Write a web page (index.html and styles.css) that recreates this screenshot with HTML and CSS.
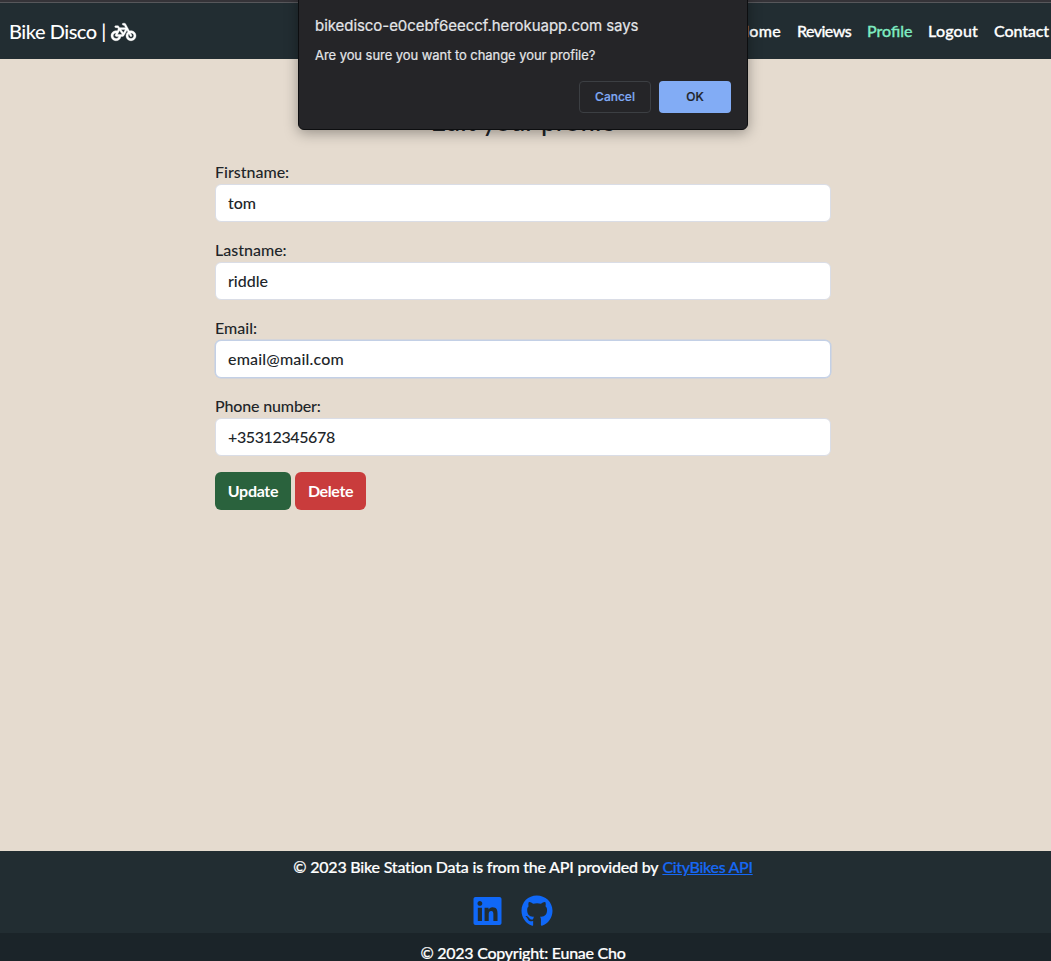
FILE: index.html
```
<!DOCTYPE html>
<html lang="en">
<head>
<meta charset="utf-8">
<title>Bike Disco</title>
<link rel="stylesheet" href="styles.css">
</head>
<body>
<header class="navbar">
  <a class="brand"><span class="brand-name">Bike Disco |</span>
    <svg class="bike" viewBox="0 0 640 512"><path fill="currentColor" stroke="currentColor" stroke-width="10" d="M312 32c-13.3 0-24 10.7-24 24s10.7 24 24 24h25.7l34.6 64H222.9l-27.4-38C191 99.7 183.7 96 176 96H120c-13.3 0-24 10.7-24 24s10.7 24 24 24h43.7l22.1 30.7-26.6 53.1c-10-2.5-20.5-3.8-31.2-3.8C57.3 224 0 281.3 0 352s57.3 128 128 128c65.3 0 119.1-48.9 127-112h49c8.5 0 16.3-4.5 20.7-11.8l84.8-143.5 21.7 40.1C402.4 276.3 384 312 384 352c0 70.7 57.3 128 128 128s128-57.3 128-128-57.3-128-128-128c-13.5 0-26.5 2.1-38.7 6L375.4 48.8C369.8 38.4 359 32 347.2 32H312zM458.6 303.7l32.3 59.7c6.3 11.7 20.9 16 32.5 9.7s16-20.9 9.7-32.5l-32.3-59.7c3.6-.6 7.4-.9 11.2-.9 39.8 0 72 32.2 72 72s-32.2 72-72 72-72-32.2-72-72c0-18.6 7-35.5 18.6-48.3zM133.2 368h65c-7.3 32.1-36 56-70.2 56-39.8 0-72-32.2-72-72s32.2-72 72-72c1.7 0 3.4.1 5.1.2l-24.2 48.5c-9 18.1 4.1 39.4 24.3 39.4zm33.7-48l50.7-101.3 72.9 101.2-.1.1H166.9zm90.5-128H365.9L317 274.8 257.4 192z"/></svg>
  </a>
  <nav class="links">
    <a class="link home">Home</a>
    <a class="link reviews">Reviews</a>
    <a class="link profile">Profile</a>
    <a class="link logout">Logout</a>
    <a class="link contact">Contact</a>
  </nav>
</header>
<main class="page">
  <h1 class="title">Edit your profile</h1>
  <form class="form">
    <label class="field"><span class="label">Firstname:</span><input class="input" value="tom"></label>
    <label class="field"><span class="label">Lastname:</span><input class="input" value="riddle"></label>
    <label class="field"><span class="label">Email:</span><input class="input input-active" value="email@mail.com"></label>
    <label class="field"><span class="label label-phone">Phone number:</span><input class="input input-phone" value="+35312345678"></label>
    <div class="actions">
      <button type="button" class="btn btn-update">Update</button>
      <button type="button" class="btn btn-delete">Delete</button>
    </div>
  </form>
</main>
<footer class="footer">
  <p class="credit"><span class="credit-text">© 2023 Bike Station Data is from the API provided by</span> <a class="api">CityBikes API</a></p>
  <div class="social">
    <svg class="linkedin" viewBox="0 0 448 512"><path fill="currentColor" d="M416 32H31.9C14.3 32 0 46.5 0 64.3v383.4C0 465.5 14.3 480 31.9 480H416c17.6 0 32-14.5 32-32.3V64.3c0-17.8-14.4-32.3-32-32.3zM135.4 416H69V202.2h66.5V416zm-33.2-243c-21.3 0-38.5-17.3-38.5-38.5S80.9 96 102.2 96c21.2 0 38.5 17.3 38.5 38.5 0 21.3-17.2 38.5-38.5 38.5zm282.1 243h-66.4V312c0-24.8-.5-56.7-34.5-56.7-34.6 0-39.9 27-39.9 54.9V416h-66.4V202.2h63.7v29.2h.9c8.9-16.8 30.6-34.5 62.9-34.5 67.2 0 79.7 44.3 79.7 101.9V416z"/></svg>
    <svg class="github" viewBox="0 0 496 512"><path fill="currentColor" d="M165.9 397.4c0 2-2.3 3.6-5.2 3.6-3.3.3-5.6-1.3-5.6-3.6 0-2 2.3-3.6 5.2-3.6 3-.3 5.6 1.3 5.6 3.6zm-31.1-4.5c-.7 2 1.3 4.3 4.3 4.9 2.6 1 5.6 0 6.2-2s-1.3-4.3-4.3-5.2c-2.6-.7-5.5.3-6.2 2.3zm44.2-1.7c-2.9.7-4.9 2.6-4.6 4.9.3 2 2.9 3.3 5.9 2.6 2.9-.7 4.9-2.6 4.6-4.6-.3-1.9-3-3.2-5.9-2.9zM244.8 8C106.1 8 0 113.3 0 252c0 110.9 69.8 205.8 169.5 239.2 12.8 2.3 17.3-5.6 17.3-12.1 0-6.2-.3-40.4-.3-61.4 0 0-70 15-84.7-29.8 0 0-11.4-29.1-27.8-36.6 0 0-22.9-15.7 1.6-15.4 0 0 24.9 2 38.6 25.8 21.9 38.6 58.6 27.5 72.9 20.9 2.3-16 8.8-27.1 16-33.7-55.9-6.2-112.3-14.3-112.3-110.5 0-27.5 7.6-41.3 23.6-58.9-2.6-6.5-11.1-33.3 2.6-67.9 20.9-6.5 69 27 69 27 20-5.6 41.5-8.5 62.8-8.5s42.8 2.9 62.8 8.5c0 0 48.1-33.6 69-27 13.7 34.7 5.2 61.4 2.6 67.9 16 17.7 25.8 31.5 25.8 58.9 0 96.5-58.9 104.2-114.8 110.5 9.2 7.9 17 22.9 17 46.4 0 33.7-.3 75.4-.3 83.6 0 6.5 4.6 14.4 17.3 12.1C428.2 457.8 496 362.9 496 252 496 113.3 383.5 8 244.8 8z"/></svg>
  </div>
  <div class="copyright"><span class="copyright-text">© 2023 Copyright: Eunae Cho</span></div>
</footer>
<div class="dialog" role="alertdialog">
  <div class="dialog-title">bikedisco-e0cebf6eeccf.herokuapp.com says</div>
  <div class="dialog-text">Are you sure you want to change your profile?</div>
  <div class="dialog-actions">
    <button type="button" class="dialog-btn cancel">Cancel</button>
    <button type="button" class="dialog-btn ok">OK</button>
  </div>
</div>
</body>
</html>
```
FILE: styles.css
```
* { box-sizing: border-box; }
body {
  margin: 0;
  height: 961px;
  overflow: hidden;
  display: flex;
  flex-direction: column;
  background: #e5dbcf;
  color: #212529;
  font: 500 16px/24px Lato, "Noto Sans", sans-serif;
}
.navbar {
  flex: none;
  height: 59px;
  padding: 0 2px 0 9px;
  display: flex;
  align-items: center;
  justify-content: space-between;
  background: #222d32;
  color: #fff;
  border-top: 2px solid #353338;
  box-shadow: inset 0 1px #57575b;
}
.brand { display: flex; align-items: center; gap: 5px; font-size: 20px; }
.brand-name { letter-spacing: -0.47px; }
.bike { width: 25px; height: 20px; margin-top: 2px; overflow: visible; }
.links { display: flex; gap: 16px; -webkit-text-stroke: 0.3px; }
.link { white-space: nowrap; }
.home { width: 44px; letter-spacing: 0.3px; }
.reviews { width: 54px; letter-spacing: -0.55px; }
.profile { width: 45px; color: #7eeac1; }
.logout { width: 50px; letter-spacing: 0.2px; }
.contact { width: 55px; letter-spacing: -0.1px; }
.page { flex: 1; width: 1046px; padding-top: 46px; }
.title {
  margin: 0 0 22px;
  font-size: 26.4px;
  line-height: 32px;
  font-weight: 500;
  text-align: center;
}
.form { width: 616px; margin: 0 auto; }
.field { display: block; margin-bottom: 16px; }
.label { display: block; height: 25px; line-height: 25px; }
.label-phone { letter-spacing: -0.15px; }
.input {
  display: block;
  width: 100%;
  height: 38px;
  padding: 0 12px 1px;
  border: 1px solid #dadde6;
  border-radius: 6px;
  outline: none;
  background: #fff;
  color: #212529;
  font: inherit;
}
.field { height: 62px; }
.field .label { margin-bottom: 0; }
.input-active { border-color: #c3d0e6; box-shadow: 0 0 0 0.5px #c3d0e6; letter-spacing: 0.18px; }
.input-phone { letter-spacing: -0.38px; }
.actions { display: flex; gap: 4px; padding-top: 1px; }
.btn {
  height: 38px;
  padding: 0 0 1px;
  border: 0;
  border-radius: 6px;
  color: #fff;
  font: 700 16px/24px Lato, sans-serif;
}
.btn-update { width: 76px; background: #2a623d; letter-spacing: -0.3px; }
.btn-delete { width: 71px; background: #c93c3c; letter-spacing: -0.4px; }
.footer {
  flex: none;
  height: 110px;
  display: flex;
  flex-direction: column;
  background: #222d32;
  color: #fff;
  text-align: center;
}
.credit { flex: none; width: 1046px; height: 24px; margin: 4px 0 16px; -webkit-text-stroke: 0.2px; }
.credit-text { letter-spacing: -0.21px; }
.api { color: #1668f5; text-decoration: underline; letter-spacing: -0.32px; }
.social { flex: none; display: flex; gap: 19px; padding-left: 473px; height: 38px; color: #1068f8; }
.linkedin { width: 29px; height: 32px; }
.github { width: 32px; height: 32px; }
.copyright { flex: none; height: 28px; padding-top: 8px; background: #1b2429; -webkit-text-stroke: 0.2px; }
.copyright-text { display: block; width: 1046px; letter-spacing: -0.26px; }
.dialog {
  position: absolute;
  left: 298px;
  top: -8px;
  width: 450px;
  height: 138px;
  padding: 23px 16px 16px;
  border: 1px solid #0d0e10;
  border-radius: 6px;
  background: #252528;
  color: #e4e5e8;
  box-shadow: 0 3px 14px rgba(0, 0, 0, 0.35);
  font-family: Inter, sans-serif;
  font-weight: 400;
}
.dialog-title { font-size: 15px; line-height: 20px; letter-spacing: -0.05px; -webkit-text-stroke: 0.2px; }
.dialog-text { margin-top: 9px; font-size: 13px; line-height: 20px; letter-spacing: -0.06px; -webkit-text-stroke: 0.2px; }
.dialog-actions { display: flex; justify-content: flex-end; gap: 8px; margin-top: 16px; }
.dialog-btn { width: 72px; height: 32px; padding: 0; border: 0; border-radius: 4px; font: 500 12px/16px Inter, sans-serif; -webkit-text-stroke: 0.2px; }
.cancel { border: 1px solid #3c3f43; background: transparent; color: #80aaf4; }
.ok { background: #82acf5; color: #202227; }
```
